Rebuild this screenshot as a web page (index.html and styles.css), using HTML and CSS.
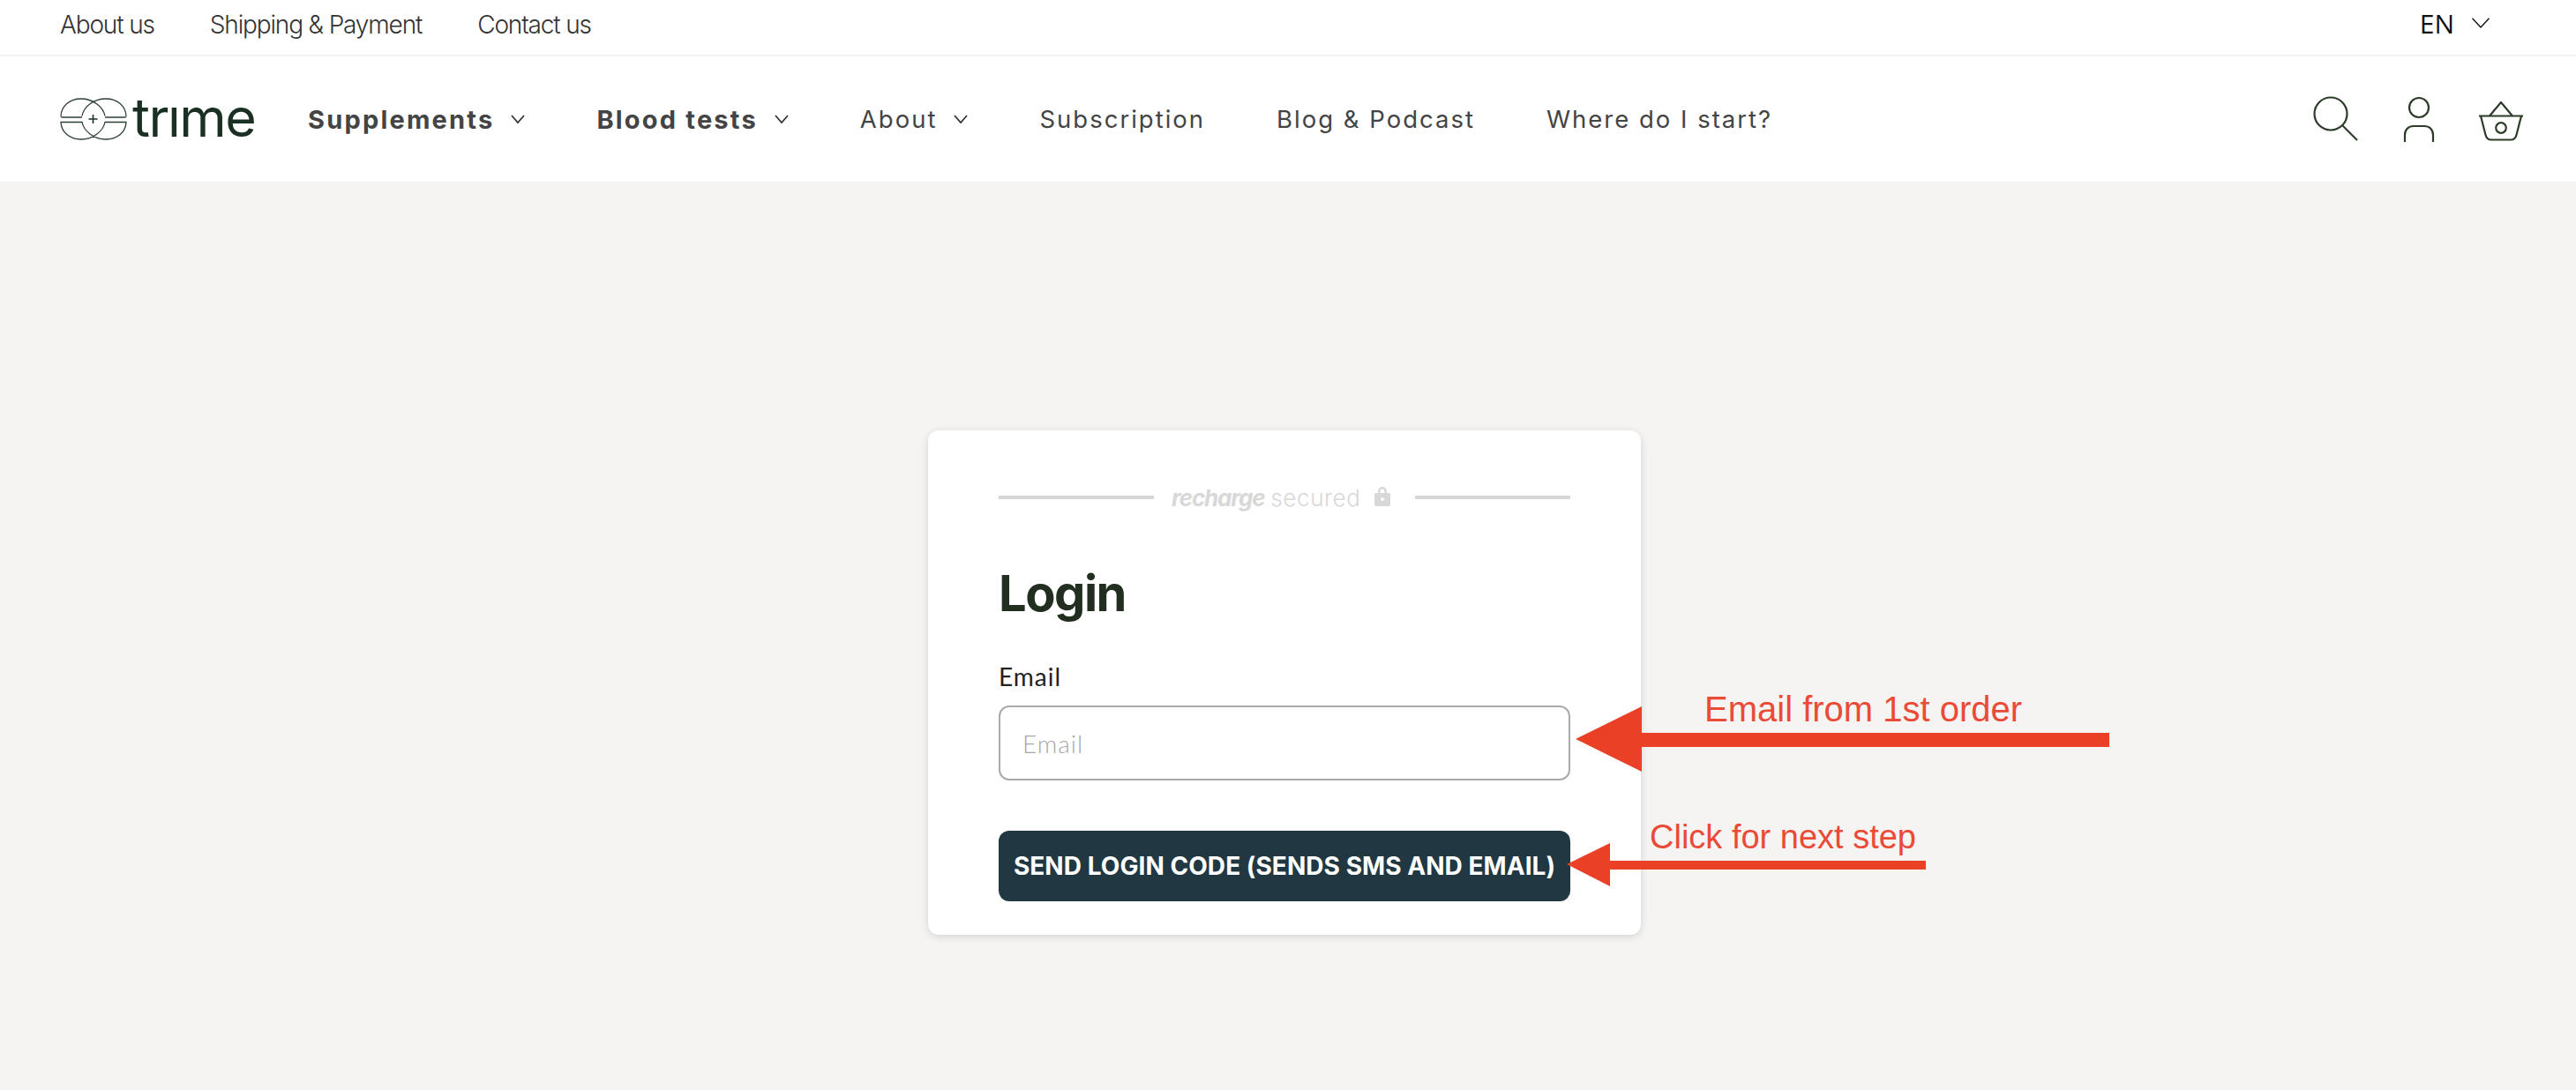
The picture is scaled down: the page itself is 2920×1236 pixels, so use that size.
FILE: index.html
```html
<!DOCTYPE html>
<html lang="en">
<head>
<meta charset="utf-8">
<title>Login</title>
<link rel="stylesheet" href="styles.css">
</head>
<body>
<header>
  <div class="topbar">
    <nav class="toplinks"><a>About us</a><a>Shipping &amp; Payment</a><a>Contact us</a></nav>
    <div class="lang"><span>EN</span>
      <svg class="lang-chev" width="20" height="12" viewBox="0 0 20 12"><path d="M.5.7 10 11 19.5.7" fill="none" stroke="#111" stroke-width="1.4"/></svg>
    </div>
  </div>
  <div class="mainbar">
    <div class="logo">
      <svg class="logo-mark" width="76" height="48" viewBox="0 0 76 48" fill="none" stroke="#2c3f33" stroke-width="1.3">
        <path d="M1 20.500C1.500 9 11 1 24 1c13 0 25 9 27 19.500M75 20.500C74.500 9 65 1 52 1 39 1 27 9 25 20.500"/>
        <path d="M1 20.500c0 1 .5 1.500 1.500 1.500h22.500M75 20.500c0 1-.5 1.500-1.500 1.500H51"/>
        <path d="M1 27.500h24C27 38 39 47 52 47c13 0 22.500-8 23-19.500H51C49 38 37 47 24 47 11 47 1.500 39 1 27.500Z"/>
        <path d="M37.500 19v10M32.500 24h10" stroke="#1d2f24" stroke-width="1.600"/>
      </svg>
      <span class="wordmark">tr<span class="dotless">i</span>me</span>
    </div>
    <nav class="mainnav">
      <a class="strong">Supplements<svg class="chev" width="16" height="10" viewBox="0 0 16 10"><path d="M1 1l7 8 7-8" fill="none" stroke="#333" stroke-width="1.800"/></svg></a>
      <a class="strong">Blood tests<svg class="chev" width="16" height="10" viewBox="0 0 16 10"><path d="M1 1l7 8 7-8" fill="none" stroke="#333" stroke-width="1.800"/></svg></a>
      <a>About<svg class="chev" width="16" height="10" viewBox="0 0 16 10"><path d="M1 1l7 8 7-8" fill="none" stroke="#333" stroke-width="1.800"/></svg></a>
      <a>Subscription</a>
      <a>Blog &amp; Podcast</a>
      <a>Where do I start?</a>
    </nav>
    <div class="icons">
      <svg width="52" height="52" viewBox="0 0 52 52" fill="none" stroke="#2c3c28" stroke-width="2.200"><circle cx="20" cy="20" r="18.500"/><path d="M33 33l17 17"/></svg>
      <svg width="36" height="52" viewBox="0 0 36 52" fill="none" stroke="#2c3c28" stroke-width="2.200"><circle cx="18" cy="13" r="11"/><path d="M2 52V44C2 38 6 34 12 34H24C30 34 34 38 34 44V52"/></svg>
      <svg width="50" height="46" viewBox="0 0 50 46" fill="none" stroke="#2c3c28" stroke-width="2.200"><path d="M0 16.500H50M2 16.500 7.500 38C8.500 42 10 43.500 14 43.500H36C40 43.500 41.500 42 42.500 38L48 16.500M12 16.500 25 1 38 16.500"/><circle cx="25" cy="30" r="5.800"/></svg>
    </div>
  </div>
</header>
<main>
  <section class="card">
    <div class="secured">
      <span class="rule"></span>
      <span class="brand"><b>recharge</b><span>secured</span></span>
      <svg class="lock" width="18" height="23" viewBox="0 0 18 23"><path fill="#d8d8d8" fill-rule="evenodd" d="M4 8V6a5 5 0 0 1 10 0v2h2a2 2 0 0 1 2 2v11a2 2 0 0 1-2 2H2a2 2 0 0 1-2-2V10a2 2 0 0 1 2-2h2Zm2.500 0h5V6a2.500 2.500 0 0 0-5 0v2ZM9 13a2 2 0 1 0 0 4 2 2 0 0 0 0-4Z"/></svg>
      <span class="rule"></span>
    </div>
    <h1>Login</h1>
    <label class="field-label" for="email">Email</label>
    <input id="email" class="field" type="email" placeholder="Email">
    <button class="submit" type="button">SEND LOGIN CODE (SENDS SMS AND EMAIL)</button>
  </section>
  <svg class="arrows" width="2920" height="1236" viewBox="0 0 2920 1236">
    <path fill="#ea4025" d="M1786 838 1861 801V831H2391V847H1861V875Z"/>
    <path fill="#ea4025" d="M1776 980 1825 956V976H2183V986H1825V1005Z"/>
  </svg>
  <div class="note note-email">Email from 1st order</div>
  <div class="note note-click">Click for next step</div>
</main>
</body>
</html>
```
FILE: styles.css
```css
* { box-sizing: border-box; }
html, body { margin: 0; height: 100%; }
body {
  height: 1236px;
  overflow: hidden;
  display: flex;
  flex-direction: column;
  background: #f5f4f2;
  font-family: Inter, "Liberation Sans", sans-serif;
  color: #444;
}
.topbar {
  height: 64px;
  display: flex;
  align-items: center;
  justify-content: space-between;
  padding: 0 98px 6px 68px;
  background: #fff;
  border-bottom: 2px solid #f2f2f2;
}
.toplinks { display: flex; gap: 63px; font-size: 28px; font-weight: 300; letter-spacing: -1.150px; color: #333; }
.lang { display: flex; align-items: center; gap: 20px; margin-top: -4px; font-family: "Open Sans", sans-serif; font-size: 30px; color: #111; }
.mainbar {
  height: 142px;
  display: flex;
  align-items: center;
  padding: 0 60px 0 68px;
  background: #fff;
}
.logo { display: flex; align-items: center; gap: 6px; width: 281px; }
.logo-mark { flex: none; }
.wordmark { font-size: 61px; font-weight: 400; color: #1a3023; letter-spacing: -1.500px; line-height: 1; margin-top: -4px; }
.dotless { display: inline-block; clip-path: inset(32% 0 0 0); }
.mainnav { display: flex; gap: 81px; font-size: 27.500px; letter-spacing: 2px; }
.mainnav a { display: flex; align-items: center; gap: 19px; }
.mainnav .strong { font-size: 29px; font-weight: 700; letter-spacing: 2.200px; }
.chev { flex: none; }
.icons { margin-left: auto; display: flex; align-items: flex-end; gap: 50px; }
main { flex: 1; display: flex; justify-content: center; align-items: flex-start; padding: 282px 8px 0 0; }
.card {
  width: 808px;
  height: 572px;
  padding: 62px 80px 0;
  background: #fff;
  border-radius: 12px;
  box-shadow: 0 2px 8px rgba(40, 40, 60, .16);
  display: flex;
  flex-direction: column;
}
.secured { display: flex; align-items: center; height: 28px; }
.rule { flex: none; width: 176px; height: 4px; background: #d6d6d6; }
.brand { margin-left: 20px; display: flex; gap: 7px; font-size: 26px; color: #d8d8d8; width: 210px; }
.brand b { font-style: italic; font-weight: 700; letter-spacing: -1.200px; }
.brand span { letter-spacing: .600px; font-weight: 300; }
.lock { flex: none; margin: -4px 0 0 20px; }
.secured .rule:last-child { margin-left: auto; }
h1 { margin: 61px 0 0; font-size: 56px; line-height: 68px; font-weight: 700; letter-spacing: -1.500px; color: #222e20; }
.field-label { margin-top: 43px; font-family: Lato, sans-serif; font-size: 28px; font-weight: 400; letter-spacing: 1px; line-height: 34px; color: #222; }
.field {
  margin-top: 16px;
  height: 85px;
  padding: 0 25px;
  border: 2px solid #aaa;
  border-radius: 12px;
  background: #fff;
  font-family: Lato, sans-serif;
  font-size: 28px;
  letter-spacing: 1px;
  font-weight: 300;
}
.field::placeholder { color: #a8a8a8; opacity: 1; }
.submit {
  margin-top: 57px;
  height: 80px;
  padding: 0;
  border: 0;
  border-radius: 12px;
  background: #213741;
  color: #fff;
  font-family: Inter, sans-serif;
  font-size: 28px;
  letter-spacing: .05px;
  font-weight: 700;
}
.arrows { position: absolute; left: 0; top: 0; pointer-events: none; }
.note { position: absolute; font-family: "Liberation Sans", sans-serif; color: #ea4a36; line-height: 1; white-space: nowrap; }
.note-email { left: 1932px; top: 784px; font-size: 40px; }
.note-click { left: 1870px; top: 930px; font-size: 38px; }
```
